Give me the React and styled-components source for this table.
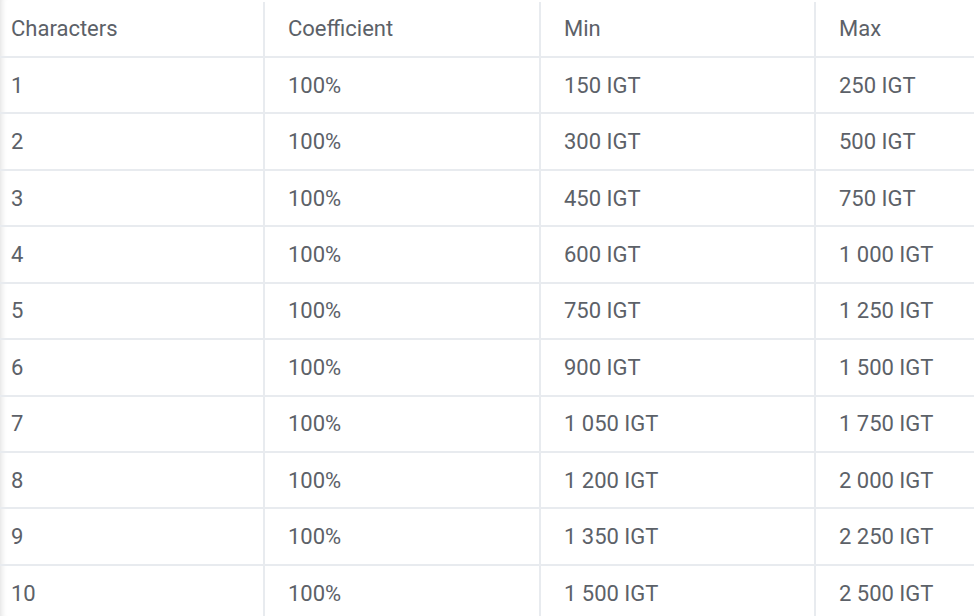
import React from 'react';
import styled, { createGlobalStyle } from 'styled-components';

const GlobalStyle = createGlobalStyle`
  html, body {
    margin: 0;
    padding: 0;
    background: #ffffff;
  }
  body {
    font-family: Roboto, "Liberation Sans", sans-serif;
    overflow: hidden;
  }
`;

const rows = [
  ['1', '100%', '150 IGT', '250 IGT'],
  ['2', '100%', '300 IGT', '500 IGT'],
  ['3', '100%', '450 IGT', '750 IGT'],
  ['4', '100%', '600 IGT', '1 000 IGT'],
  ['5', '100%', '750 IGT', '1 250 IGT'],
  ['6', '100%', '900 IGT', '1 500 IGT'],
  ['7', '100%', '1 050 IGT', '1 750 IGT'],
  ['8', '100%', '1 200 IGT', '2 000 IGT'],
  ['9', '100%', '1 350 IGT', '2 250 IGT'],
  ['10', '100%', '1 500 IGT', '2 500 IGT'],
];

const App = () => {
  return (
    <>
      <GlobalStyle />
      <Scroller>
        <Table>
          <Row>
            <Cell>Characters</Cell>
            <Cell>Coefficient</Cell>
            <Cell>Min</Cell>
            <Cell>Max</Cell>
          </Row>
          {rows.map((r) => (
            <Row key={r[0]}>
              {r.map((v, i) => (
                <Cell key={i}>{v}</Cell>
              ))}
            </Row>
          ))}
        </Table>
      </Scroller>
    </>
  );
};

export default App;

const Scroller = styled.div`
  width: 974px;
  height: 616px;
  overflow: hidden;
  position: relative;
  padding-top: 1.5px;
  box-sizing: border-box;
  box-shadow: inset 7px 0 6px -6px rgba(0, 0, 0, 0.14);
`;

const Table = styled.div`
  display: grid;
  grid-template-columns: 277px 276px 275px 276px;
  margin-left: -12px;
  width: 1104px;
`;

const Row = styled.div`
  display: contents;
`;

const Cell = styled.div`
  height: 56.44px;
  box-sizing: border-box;
  display: flex;
  align-items: center;
  padding: 0 23px;
  border-bottom: 2px solid #e8ebef;
  border-right: 2px solid #e8ebef;
  font-size: 22px;
  color: #5c6168;
  white-space: nowrap;
  &:nth-child(4n) {
    border-right: none;
  }
`;
